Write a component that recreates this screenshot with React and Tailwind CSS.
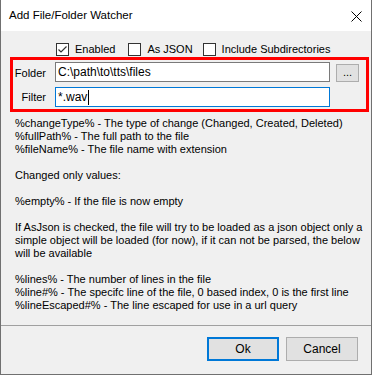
import React from 'react'

const lines = [
  '%changeType% - The type of change (Changed, Created, Deleted)',
  '%fullPath% - The full path to the file',
  '%fileName% - The file name with extension',
  '',
  'Changed only values:',
  '',
  '%empty% - If the file is now empty',
  '',
  'If AsJson is checked, the file will try to be loaded as a json object only a',
  'simple object will be loaded (for now), if it can not be parsed, the below',
  'will be available',
  '',
  '%lines% - The number of lines in the file',
  '%line#% - The specifc line of the file, 0 based index, 0 is the first line',
  '%lineEscaped#% - The line escaped for use in a url query',
]

function CheckBox({ checked, label, className }) {
  return (
    <div className={`flex items-center ${className}`}>
      <div className="w-[13px] h-[13px] border border-[#333333] bg-white flex items-center justify-center">
        {checked && (
          <svg width="11" height="11" viewBox="0 0 11 11">
            <polyline points="1.5,5.5 4,8 9.5,2.5" fill="none" stroke="#333333" strokeWidth="1.2" />
          </svg>
        )}
      </div>
      <span className="ml-[6px] text-[11px] leading-[13px]">{label}</span>
    </div>
  )
}

export default function App() {
  return (
    <div className="w-[372px] h-[375px] flex flex-col border-x border-b border-[#707070] bg-[#f0f0f0] text-black font-['Liberation_Sans',Arial,sans-serif]">
      <div className="h-[31px] bg-white flex items-center justify-between pl-[8px] pr-[9px]">
        <span className="text-[11.5px] pt-[1px]">Add File/Folder Watcher</span>
        <svg width="11" height="11" viewBox="0 0 11 11" className="mt-[1px]">
          <line x1="0.5" y1="0.5" x2="10.5" y2="10.5" stroke="#000" strokeWidth="1" />
          <line x1="10.5" y1="0.5" x2="0.5" y2="10.5" stroke="#000" strokeWidth="1" />
        </svg>
      </div>

      <div className="flex mt-[12px] pl-[55px] h-[13px]">
        <CheckBox checked label="Enabled" />
        <CheckBox label="As JSON" className="ml-[13px]" />
        <CheckBox label="Include Subdirectories" className="ml-[10px]" />
      </div>

      <div className="ml-[9px] mt-[1px] w-[359px] h-[55px] border-[3px] border-[#ff0000] flex flex-col pt-[2px]">
        <div className="flex items-center h-[20px]">
          <span className="w-[33px] text-right text-[11px] mr-[9px] pt-[2px]">Folder</span>
          <div className="w-[275px] h-[20px] bg-white border border-[#7a7a7a] flex items-center pl-[2px] text-[12px]">
            C:\path\to\tts\files
          </div>
          <div className="ml-[6px] w-[23px] h-[18px] mt-[2px] bg-[#e1e1e1] border border-[#adadad] flex items-center justify-center text-[11px] pb-[1px] leading-none">
            ...
          </div>
        </div>
        <div className="flex items-center h-[20px] mt-[5px]">
          <span className="w-[33px] text-right text-[11px] mr-[9px]">Filter</span>
          <div className="w-[275px] h-[20px] bg-white border border-[#0078d7] flex items-center pl-[2px] text-[12px]">
            *.wav
            <span className="w-px h-[15px] bg-black ml-px" />
          </div>
        </div>
      </div>

      <div className="mt-[5px] pl-[14px] h-[208px] text-[11px] leading-[13px]">
        {lines.map((l, i) => (
          <div key={i} className="h-[13px] whitespace-pre">{l || ' '}</div>
        ))}
      </div>

      <div className="h-px bg-[#a0a0a0]" />

      <div className="flex justify-end gap-[7px] pr-[13px] mt-[11px]">
        <button className="w-[72px] h-[24px] bg-[#e1e1e1] border-2 border-[#0078d7] text-[12px]">Ok</button>
        <button className="w-[72px] h-[24px] bg-[#e1e1e1] border border-[#adadad] text-[12px]">Cancel</button>
      </div>
    </div>
  )
}
